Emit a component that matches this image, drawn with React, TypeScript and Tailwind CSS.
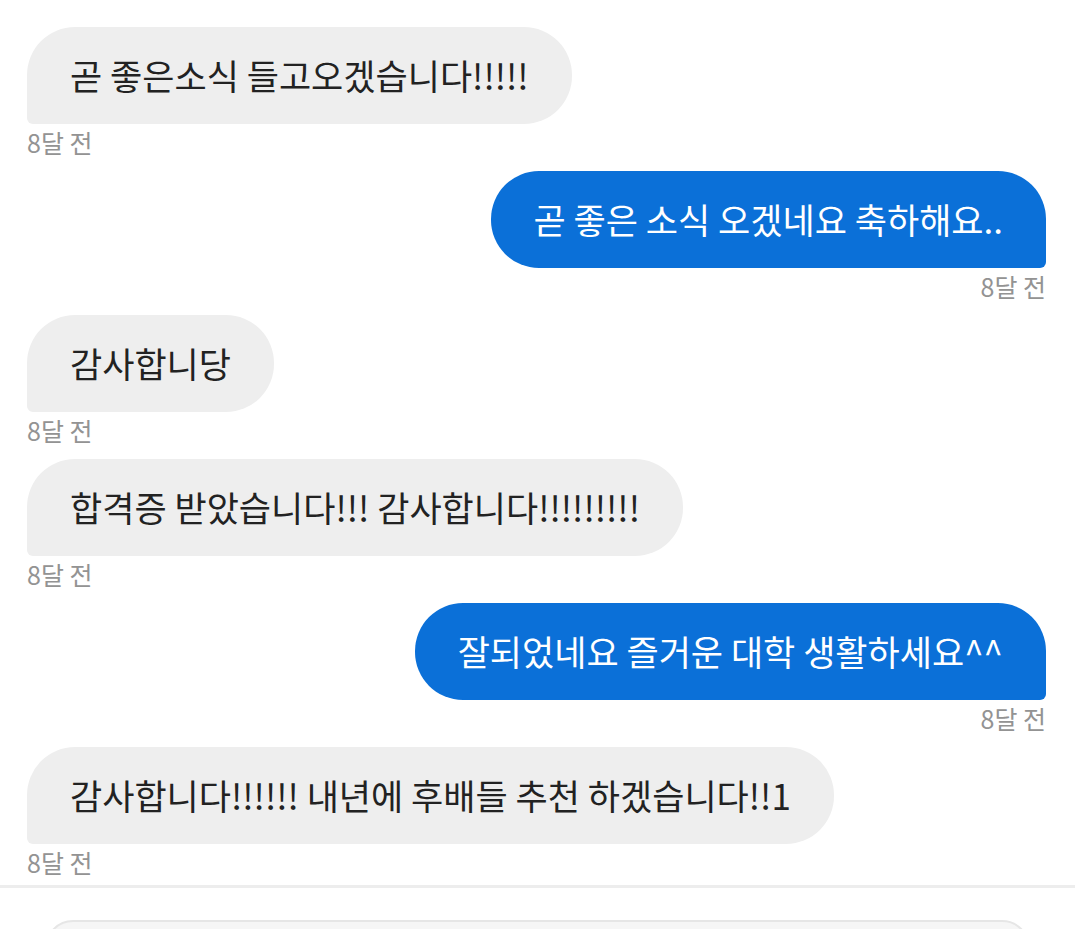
type Msg = { text: string; mine?: boolean; time: string }

const messages: Msg[] = [
  { text: '곧 좋은소식 들고오겠습니다!!!!!', time: '8달 전' },
  { text: '곧 좋은 소식 오겠네요 축하해요..', mine: true, time: '8달 전' },
  { text: '감사합니당', time: '8달 전' },
  { text: '합격증 받았습니다!!! 감사합니다!!!!!!!!!', time: '8달 전' },
  { text: '잘되었네요 즐거운 대학 생활하세요^^', mine: true, time: '8달 전' },
  { text: '감사합니다!!!!!! 내년에 후배들 추천 하겠습니다!!1', time: '8달 전' },
]

function Bubble({ msg }: { msg: Msg }) {
  return (
    <div className={msg.mine ? 'flex flex-col items-end' : 'flex flex-col items-start'}>
      <div
        className={
          msg.mine
            ? 'h-[97px] flex items-center px-[43px] text-[35px] text-white bg-[#0b70d8] rounded-[48px] rounded-br-[6px] whitespace-nowrap'
            : 'h-[97px] flex items-center px-[43px] text-[35px] text-[#222222] bg-[#eeeeee] rounded-[48px] rounded-bl-[6px] whitespace-nowrap'
        }
      >
        {msg.text}
      </div>
      <div className="mt-[4px] mb-[15px] text-[25px] leading-[28px] text-[#939393]">{msg.time}</div>
    </div>
  )
}

export default function App() {
  return (
    <div
      className="w-[1075px] h-[929px] overflow-hidden bg-white"
      style={{ fontFamily: '"Noto Sans CJK KR", "Noto Sans", sans-serif' }}
    >
      <div className="pt-[27px] pl-[27px] pr-[29px]">
        {messages.map((m, i) => (
          <Bubble key={i} msg={m} />
        ))}
      </div>
      <div className="mt-[-6px] h-[3px] bg-[#ededed]" />
      <div className="px-[45px] pt-[32px]">
        <div className="h-[60px] rounded-[28px] border-2 border-[#e6e6e6] bg-[#f6f6f6]" />
      </div>
    </div>
  )
}
